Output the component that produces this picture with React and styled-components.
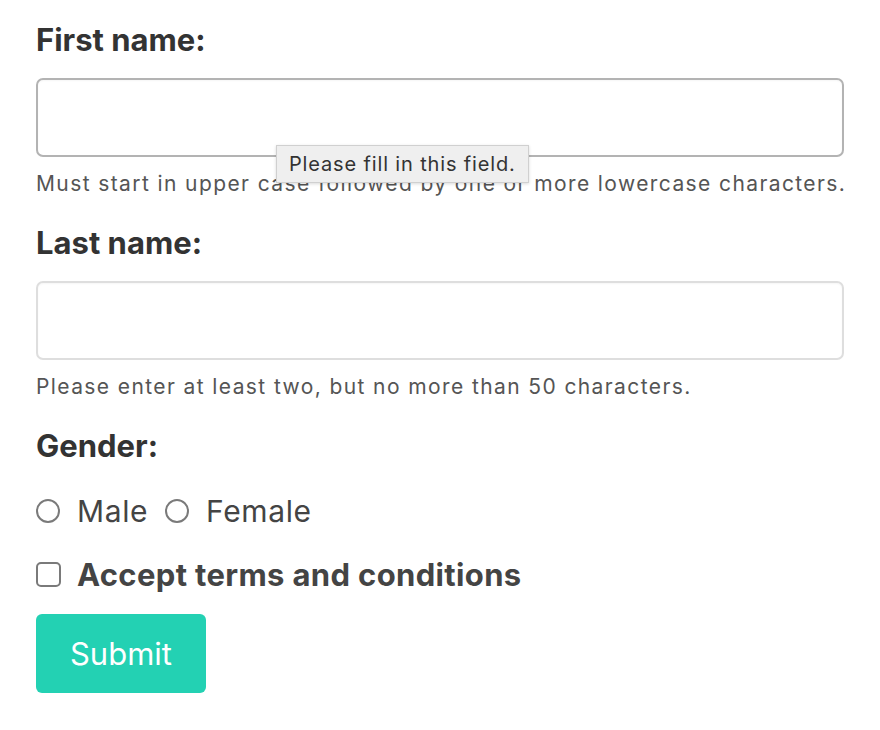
import React from "react";
import styled, { createGlobalStyle } from "styled-components";

const GlobalStyle = createGlobalStyle`
  body {
    margin: 0;
    background: #fff;
    font-family: Inter, "Open Sans", sans-serif;
    color: #333;
  }
`;

const Form = styled.form`
  width: 808px;
  padding: 20px 0 0 36px;
  display: flex;
  flex-direction: column;
`;

const Field = styled.div`
  position: relative;
  display: flex;
  flex-direction: column;
  margin-bottom: 24px;
`;

const Label = styled.label`
  font-size: 31px;
  font-weight: 700;
  line-height: 40px;
  color: #333;
  margin-bottom: 18px;
`;

const Input = styled.input`
  box-sizing: border-box;
  width: 100%;
  height: 79px;
  border: 2px solid ${(p) => (p.$focused ? "#b3b3b3" : "#dedede")};
  border-radius: 7px;
  outline: none;
  font: inherit;
  font-size: 28px;
  padding: 0 16px;
  box-shadow: inset 0 1px 2px rgba(0, 0, 0, 0.04);
`;

const Hint = styled.div`
  font-size: 21px;
  letter-spacing: 1.4px;
  line-height: 30px;
  white-space: nowrap;
  color: #555;
  margin-top: 12px;
`;

const Tooltip = styled.div`
  position: absolute;
  left: 240px;
  top: 125px;
  background: #efefef;
  border: 1px solid #d0d0d0;
  box-shadow: 0 1px 3px rgba(0, 0, 0, 0.15);
  font-size: 20px;
  letter-spacing: 0.85px;
  color: #333;
  padding: 5px 12px;
  line-height: 26px;
`;

const Options = styled.div`
  display: flex;
  align-items: center;
  gap: 17px;
  font-size: 30px;
  letter-spacing: 0.6px;
  color: #444;
  margin: 9px 0 27px;
`;

const Option = styled.label`
  display: flex;
  align-items: center;
  gap: 17px;
`;

const Radio = styled.span`
  width: 24px;
  height: 24px;
  border: 2px solid #7a7a7a;
  border-radius: 50%;
  box-sizing: border-box;
`;

const CheckRow = styled.label`
  display: flex;
  align-items: center;
  gap: 16px;
  font-size: 31px;
  letter-spacing: 0.35px;
  font-weight: 700;
  color: #444;
  margin-bottom: 21px;
`;

const Box = styled.span`
  width: 25px;
  height: 25px;
  border: 2px solid #7a7a7a;
  border-radius: 5px;
  box-sizing: border-box;
`;

const Submit = styled.button`
  width: 170px;
  height: 79px;
  border: none;
  border-radius: 6px;
  background: #23d1b3;
  color: #fff;
  font-family: inherit;
  font-size: 31px;
  cursor: pointer;
`;

const App = () => {
  return (
    <>
      <GlobalStyle />
      <Form onSubmit={(e) => e.preventDefault()}>
        <Field>
          <Label>First name:</Label>
          <Input $focused />
          <Hint>Must start in upper case followed by one or more lowercase characters.</Hint>
          <Tooltip>Please fill in this field.</Tooltip>
        </Field>
        <Field>
          <Label>Last name:</Label>
          <Input />
          <Hint>Please enter at least two, but no more than 50 characters.</Hint>
        </Field>
        <Label>Gender:</Label>
        <Options>
          <Option><Radio />Male</Option>
          <Option><Radio />Female</Option>
        </Options>
        <CheckRow><Box />Accept terms and conditions</CheckRow>
        <div>
          <Submit type="submit">Submit</Submit>
        </div>
      </Form>
    </>
  );
};

export default App;
